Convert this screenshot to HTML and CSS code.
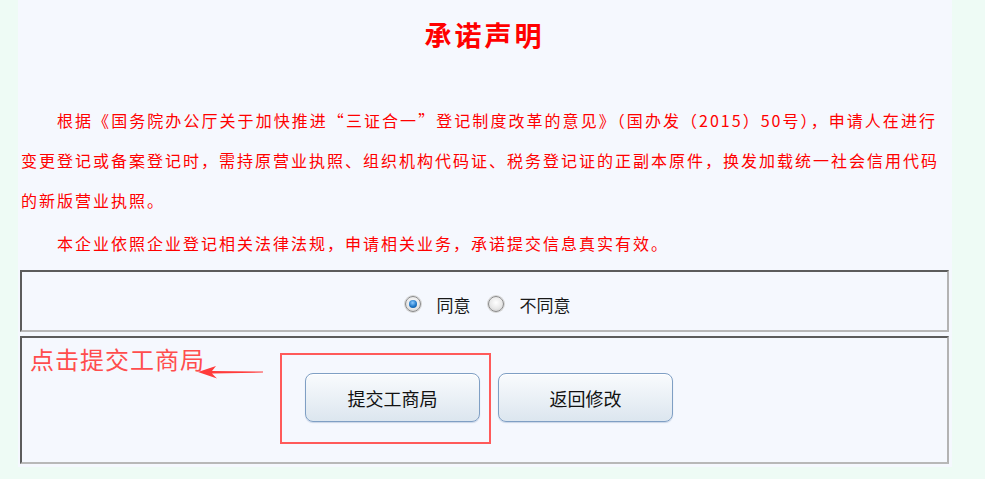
FILE: index.html
```html
<!DOCTYPE html>
<html lang="zh-CN">
<head>
<meta charset="utf-8">
<title>承诺声明</title>
<link rel="stylesheet" href="styles.css">
</head>
<body>
<div class="panel">
  <h1 class="title">承诺声明</h1>
  <div class="statement">
    <p class="para">
      <span class="line line-first line-full">根据《国务院办公厅关于加快推进“三证合一”登记制度改革的意见》（国办发（2015）50号），申请人在进行</span>
      <span class="line line-full">变更登记或备案登记时，需持原营业执照、组织机构代码证、税务登记证的正副本原件，换发加载统一社会信用代码</span>
      <span class="line">的新版营业执照。</span>
    </p>
    <p class="para para-second">
      <span class="line line-first">本企业依照企业登记相关法律法规，申请相关业务，承诺提交信息真实有效。</span>
    </p>
  </div>
  <div class="box box-agree">
    <label class="opt"><input type="radio" name="agree" class="radio" checked><span>同意</span></label>
    <label class="opt"><input type="radio" name="agree" class="radio"><span>不同意</span></label>
  </div>
  <div class="box box-actions">
    <div class="note">点击提交工商局</div>
    <svg class="arrow" width="66" height="14" viewBox="0 0 66 14">
      <path d="M0 7 L18 1 L14 6 L65 6.6 L65 7.6 L14 8.6 L19 13.5 Z" fill="#ff3b3b"/>
    </svg>
    <div class="highlight"></div>
    <div class="buttons">
      <button class="btn" type="button">提交工商局</button>
      <button class="btn" type="button">返回修改</button>
    </div>
  </div>
</div>
</body>
</html>
```
FILE: styles.css
```css
html, body {
  margin: 0;
  padding: 0;
}
body {
  background: #eefbf5;
  font-family: "Noto Sans CJK SC", "Noto Sans", sans-serif;
  width: 985px;
  height: 479px;
  overflow: hidden;
}
.panel {
  margin-left: 18px;
  width: 929px;
  height: 467px;
  padding: 0 3px 0 2px;
  background: #f5f8fe;
}
.title {
  margin: 0;
  padding-top: 20px;
  height: 30px;
  line-height: 30px;
  text-align: center;
  font-size: 27px;
  font-weight: bold;
  letter-spacing: 3px;
  color: #ff0000;
}
.statement {
  margin: 50px 12px 0 1px;
  color: #ff0000;
  font-size: 16px;
  letter-spacing: 2px;
}
.para {
  margin: 0;
  line-height: 40px;
}
.para-second {
  margin-top: 3px;
}
.line {
  display: block;
  white-space: nowrap;
  height: 40px;
}
.line-first {
  text-indent: 36px;
}
.line-full {
  text-align: justify;
  text-align-last: justify;
}
.box {
  box-sizing: border-box;
  border-style: solid;
  border-width: 2px;
  border-color: #5c5c5c #b3b3b3 #b8b8b8 #5c5c5c;
  width: 929px;
}
.box-agree {
  margin-top: 7px;
  height: 62px;
  display: flex;
  justify-content: center;
  align-items: center;
  gap: 17px;
  padding: 6px 0 0 6px;
  font-size: 17px;
  color: #1a1a1a;
}
.opt {
  display: flex;
  align-items: center;
  gap: 16px;
}
.radio {
  appearance: none;
  -webkit-appearance: none;
  margin: 0;
  width: 16px;
  height: 16px;
  border-radius: 50%;
  border: 1px solid #8a8a8a;
  background: radial-gradient(circle at 50% 40%, #ffffff 0%, #e8e8e8 55%, #c4c4c4 100%);
  box-shadow: 0 0 0 1px #d6d6d6;
  position: relative;
}
.radio:checked::after {
  content: "";
  position: absolute;
  left: 3px;
  top: 3px;
  width: 8px;
  height: 8px;
  border-radius: 50%;
  background: radial-gradient(circle at 45% 35%, #8ccaff 0%, #1f78c8 55%, #0b4a8c 100%);
}
.box-actions {
  margin-top: 4px;
  height: 128px;
  position: relative;
  padding: 35px 0 0 9px;
}
.buttons {
  display: flex;
  justify-content: center;
  gap: 18px;
}
.btn {
  width: 175px;
  height: 49px;
  border: 1px solid #7f9fc4;
  border-radius: 8px;
  background: linear-gradient(#f9fbfd, #dce6ef);
  box-shadow: inset 0 1px 0 #ffffff, 0 1px 1px rgba(120, 150, 190, 0.35);
  font-family: "Noto Sans CJK SC", "Noto Sans", sans-serif;
  font-size: 18px;
  color: #111;
  padding: 0;
}
.note {
  position: absolute;
  left: 8px;
  top: 6px;
  font-size: 24px;
  line-height: 30px;
  color: #ff4d4d;
  letter-spacing: 1px;
}
.arrow {
  position: absolute;
  left: 176px;
  top: 27px;
}
.highlight {
  position: absolute;
  left: 258px;
  top: 15px;
  width: 207px;
  height: 87px;
  border: 2px solid #ff5a5a;
}
```
